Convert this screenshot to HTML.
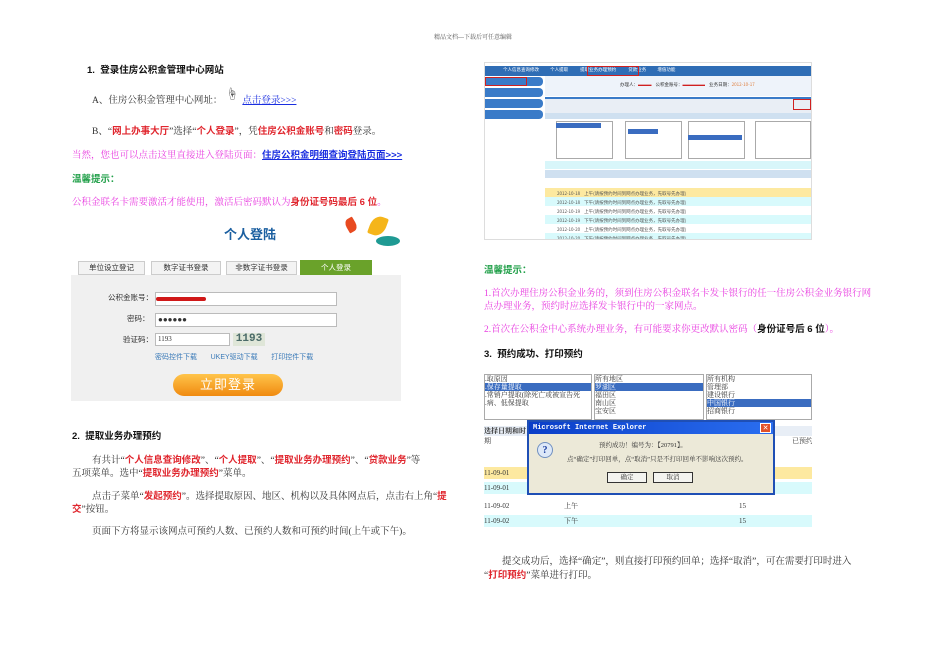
<!DOCTYPE html>
<html><head><meta charset="utf-8"><style>
*{margin:0;padding:0;box-sizing:border-box}
body{width:950px;height:672px;background:#fff;position:relative;overflow:hidden;font-family:"Liberation Serif","Noto Serif CJK SC","Noto Sans CJK SC",serif;font-size:9.5px;color:#333}
.a{position:absolute;white-space:nowrap}
.b{font-family:"Liberation Sans","Noto Sans CJK SC",sans-serif;font-weight:bold;color:#111}
.r{color:#e0262e;font-family:"Liberation Sans","Noto Sans CJK SC",sans-serif;font-weight:bold}
.p{color:#e83fe0}
.g{color:#22a04a;font-family:"Liberation Sans","Noto Sans CJK SC",sans-serif;font-weight:bold}
.l{color:#1a2ee0;text-decoration:underline}
.s{font-family:"Liberation Sans","Noto Sans CJK SC",sans-serif}
.t{position:absolute;font-size:4.5px;line-height:5px;white-space:nowrap;font-family:"Noto Sans CJK SC",sans-serif}
</style></head><body>
<div class="a" style="left:434px;top:32px;font-size:6px;color:#555">精品文档---下载后可任意编辑</div>

<div class="a b" style="left:87px;top:62px;font-size:9.5px">1.&nbsp; 登录住房公积金管理中心网站</div>
<div class="a" style="left:92px;top:92px">A、住房公积金管理中心网址：<span style="display:inline-block;width:20px"></span><span class="l">点击登录&gt;&gt;&gt;</span></div>
<div class="a" style="left:226px;top:85px;font-size:12px">☝</div>
<div class="a" style="left:92px;top:123px">B、“<span class="r">网上办事大厅</span>”选择“<span class="r">个人登录</span>”，凭<span class="r">住房公积金账号</span>和<span class="r">密码</span>登录。</div>
<div class="a p" style="left:72px;top:147px">当然，您也可以点击这里直接进入登陆页面：<span class="l s" style="font-weight:bold">住房公积金明细查询登陆页面&gt;&gt;&gt;</span></div>
<div class="a g" style="left:72px;top:171px">温馨提示：</div>
<div class="a p" style="left:72px;top:194px">公积金联名卡需要激活才能使用，激活后密码默认为<span class="r">身份证号码最后 6 位</span>。</div>

<!-- login image -->
<div class="a s" style="left:224px;top:224px;font-size:13px;font-weight:bold;color:#1b5fa0">个人登陆</div>
<div class="a" style="left:346px;top:218px;width:10px;height:14px;background:#e84a20;border-radius:50% 10% 50% 10%;transform:rotate(-30deg)"></div>
<div class="a" style="left:370px;top:216px;width:16px;height:20px;background:#f5b51a;border-radius:60% 10% 60% 10%;transform:rotate(20deg)"></div>
<div class="a" style="left:376px;top:236px;width:24px;height:10px;background:#1f9a93;border-radius:50%"></div>
<div class="a" style="left:71px;top:275px;width:330px;height:126px;background:#f0f0f0"></div>
<div class="a s" style="left:78px;top:261px;width:67px;height:14px;background:#f3f3f3;border:1px solid #ccc;font-size:7.5px;text-align:center;line-height:12px">单位设立登记</div>
<div class="a s" style="left:151px;top:261px;width:70px;height:14px;background:#f3f3f3;border:1px solid #ccc;font-size:7.5px;text-align:center;line-height:12px">数字证书登录</div>
<div class="a s" style="left:226px;top:261px;width:71px;height:14px;background:#f3f3f3;border:1px solid #ccc;font-size:7.5px;text-align:center;line-height:12px">非数字证书登录</div>
<div class="a s" style="left:300px;top:260px;width:72px;height:15px;background:#6aa22a;color:#fff;font-size:7.5px;text-align:center;line-height:15px">个人登录</div>
<div class="a s" style="left:108px;top:292px;font-size:7.5px">公积金账号：</div>
<div class="a" style="left:155px;top:292px;width:182px;height:14px;background:#fff;border:1px solid #bbb"></div>
<div class="a" style="left:156px;top:297px;width:50px;height:4px;background:#d01818;border-radius:2px"></div>
<div class="a s" style="left:127px;top:313px;font-size:7.5px">密码：</div>
<div class="a" style="left:155px;top:313px;width:182px;height:14px;background:#fff;border:1px solid #bbb;font-size:8px;line-height:12px;padding-left:2px;font-weight:bold">●●●●●●</div>
<div class="a s" style="left:123px;top:334px;font-size:7.5px">验证码：</div>
<div class="a" style="left:155px;top:333px;width:75px;height:13px;background:#fff;border:1px solid #bbb;font-size:7px;line-height:11px;padding-left:2px">1193</div>
<div class="a" style="left:233px;top:333px;width:32px;height:13px;background:#dfe6d8;font-family:'Liberation Mono',monospace;font-size:11px;font-weight:bold;color:#4a6a68;line-height:13px;text-align:center">1193</div>
<div class="a s" style="left:155px;top:352px;font-size:7px;color:#3a7ab8">密码控件下载&nbsp;&nbsp;&nbsp;&nbsp;&nbsp;&nbsp;&nbsp;UKEY驱动下载&nbsp;&nbsp;&nbsp;&nbsp;&nbsp;&nbsp;&nbsp;打印控件下载</div>
<div class="a s" style="left:173px;top:374px;width:110px;height:22px;border-radius:11px;background:linear-gradient(#ffc44a,#f08a10);color:#fff;font-size:13px;text-align:center;line-height:22px;letter-spacing:1px">立即登录</div>

<div class="a b" style="left:72px;top:428px">2.&nbsp; 提取业务办理预约</div>
<div class="a" style="left:92px;top:452px">有共计“<span class="r">个人信息查询修改</span>”、“<span class="r">个人提取</span>”、“<span class="r">提取业务办理预约</span>”、“<span class="r">贷款业务</span>”等</div>
<div class="a" style="left:72px;top:465px">五项菜单。选中“<span class="r">提取业务办理预约</span>”菜单。</div>
<div class="a" style="left:92px;top:488px">点击子菜单“<span class="r">发起预约</span>”。选择提取原因、地区、机构以及具体网点后，点击右上角“<span class="r">提</span></div>
<div class="a" style="left:72px;top:501px"><span class="r">交</span>”按钮。</div>
<div class="a" style="left:92px;top:523px">页面下方将显示该网点可预约人数、已预约人数和可预约时间(上午或下午)。</div>

<!-- screenshot 1 -->
<div class="a" style="left:484px;top:62px;width:328px;height:178px;background:#fff;border:1px solid #ddd;overflow:hidden">
 <div style="position:absolute;left:0;top:3px;width:328px;height:10px;background:#2f6db5"></div>
 <div class="t" style="left:18px;top:5px;color:#fff">个人信息查询修改&nbsp;&nbsp;&nbsp;&nbsp;&nbsp;&nbsp;&nbsp;&nbsp;&nbsp;&nbsp;&nbsp;个人提取&nbsp;&nbsp;&nbsp;&nbsp;&nbsp;&nbsp;&nbsp;&nbsp;&nbsp;&nbsp;&nbsp;&nbsp;提取业务办理预约&nbsp;&nbsp;&nbsp;&nbsp;&nbsp;&nbsp;&nbsp;&nbsp;&nbsp;&nbsp;&nbsp;&nbsp;贷款业务&nbsp;&nbsp;&nbsp;&nbsp;&nbsp;&nbsp;&nbsp;&nbsp;&nbsp;&nbsp;&nbsp;增值功能</div>
 <div style="position:absolute;left:102px;top:3px;width:52px;height:10px;border:1px solid #d02020"></div>
 <div style="position:absolute;left:0;top:14px;width:58px;height:9px;background:#3a7bc8;border-radius:0 4px 4px 0"></div>
 <div style="position:absolute;left:0;top:14px;width:42px;height:9px;border:1px solid #d02020"></div>
 <div style="position:absolute;left:0;top:25px;width:58px;height:9px;background:#3a7bc8;border-radius:0 4px 4px 0"></div>
 <div style="position:absolute;left:0;top:36px;width:58px;height:9px;background:#3a7bc8;border-radius:0 4px 4px 0"></div>
 <div style="position:absolute;left:0;top:47px;width:58px;height:9px;background:#3a7bc8;border-radius:0 4px 4px 0"></div>
 <div style="position:absolute;left:60px;top:13px;width:268px;height:20px;background:#eef3fa"></div>
 <div class="t" style="left:135px;top:20px">办理人：<span style="color:#d02020">▬▬▬</span>&nbsp;&nbsp;&nbsp;&nbsp;公积金账号：<span style="color:#d02020">▬▬▬▬▬</span>&nbsp;&nbsp;&nbsp;&nbsp;业务日期：<span style="color:#e08040">2012-10-17</span></div>
 <div style="position:absolute;left:60px;top:34px;width:268px;height:2px;background:#3a7bc8"></div>
 <div style="position:absolute;left:60px;top:36px;width:268px;height:14px;background:#e9eef5"></div>
 <div style="position:absolute;left:308px;top:36px;width:18px;height:11px;border:1px solid #d02020"></div>
 <div style="position:absolute;left:60px;top:50px;width:268px;height:6px;background:#cfe0f0"></div>
 <div style="position:absolute;left:71px;top:58px;width:57px;height:38px;border:1px solid #aaa;background:#fff"></div>
 <div style="position:absolute;left:71px;top:60px;width:45px;height:5px;background:#3a6cc0"></div>
 <div style="position:absolute;left:140px;top:58px;width:57px;height:38px;border:1px solid #aaa;background:#fff"></div>
 <div style="position:absolute;left:143px;top:66px;width:30px;height:5px;background:#3a6cc0"></div>
 <div style="position:absolute;left:203px;top:58px;width:57px;height:38px;border:1px solid #aaa;background:#fff"></div>
 <div style="position:absolute;left:203px;top:72px;width:54px;height:5px;background:#3a6cc0"></div>
 <div style="position:absolute;left:270px;top:58px;width:56px;height:38px;border:1px solid #aaa;background:#fff"></div>
 <div style="position:absolute;left:60px;top:98px;width:268px;height:8px;background:#d8f6fa"></div>
 <div style="position:absolute;left:60px;top:107px;width:268px;height:8px;background:#cfe0f0"></div>
 <div style="position:absolute;left:60px;top:125px;width:268px;height:9px;background:#fde9a0"></div>
 <div style="position:absolute;left:60px;top:134px;width:268px;height:9px;background:#d8fafc"></div>
 <div style="position:absolute;left:60px;top:152px;width:268px;height:9px;background:#d8fafc"></div>
 <div style="position:absolute;left:60px;top:170px;width:268px;height:9px;background:#d8fafc"></div>
 <div class="t" style="left:72px;top:127px;line-height:9px;color:#555">2012-10-18&nbsp;&nbsp;&nbsp;&nbsp;上午(请按预约时间到网点办理业务，先取号先办理)<br>2012-10-18&nbsp;&nbsp;&nbsp;&nbsp;下午(请按预约时间到网点办理业务，先取号先办理)<br>2012-10-19&nbsp;&nbsp;&nbsp;&nbsp;上午(请按预约时间到网点办理业务，先取号先办理)<br>2012-10-19&nbsp;&nbsp;&nbsp;&nbsp;下午(请按预约时间到网点办理业务，先取号先办理)<br>2012-10-20&nbsp;&nbsp;&nbsp;&nbsp;上午(请按预约时间到网点办理业务，先取号先办理)<br>2012-10-20&nbsp;&nbsp;&nbsp;&nbsp;下午(请按预约时间到网点办理业务，先取号先办理)</div>
</div>

<div class="a g" style="left:484px;top:262px">温馨提示：</div>
<div class="a p" style="left:484px;top:285px">1.首次办理住房公积金业务的，须到住房公积金联名卡发卡银行的任一住房公积金业务银行网</div>
<div class="a p" style="left:484px;top:298px">点办理业务，预约时应选择发卡银行中的一家网点。</div>
<div class="a p" style="left:484px;top:321px">2.首次在公积金中心系统办理业务，有可能要求你更改默认密码（<span class="b">身份证号后 6 位</span>）。</div>
<div class="a b" style="left:484px;top:346px">3.&nbsp; 预约成功、打印预约</div>

<!-- screenshot 2 -->
<div class="a" style="left:484px;top:370px;width:328px;height:162px;background:#fff;overflow:hidden;font-size:7px">
 <div style="position:absolute;left:0;top:4px;width:108px;height:46px;border:1px solid #aaa;line-height:8px">.取原因<br><span style="background:#3a6cc0;color:#fff;display:block">.保存量提取</span>.常销户提取(除死亡或被宣告死<br>.病、低保提取</div>
 <div style="position:absolute;left:110px;top:4px;width:110px;height:46px;border:1px solid #aaa;line-height:8px">所有地区<br><span style="background:#3a6cc0;color:#fff;display:block">罗湖区</span>福田区<br>南山区<br>宝安区</div>
 <div style="position:absolute;left:222px;top:4px;width:106px;height:46px;border:1px solid #aaa;line-height:8px">所有机构<br>管理部<br>建设银行<br><span style="background:#3a6cc0;color:#fff;display:block">中国银行</span>招商银行</div>
 <div style="position:absolute;left:0;top:56px;width:328px;height:10px;background:#e8eef6;font-weight:bold">选择日期和时</div>
 <div style="position:absolute;left:0;top:66px;width:328px;height:10px;line-height:10px">期<span style="position:absolute;left:308px">已预约</span></div>
 <div style="position:absolute;left:0;top:97px;width:328px;height:12px;background:#fde9a0;line-height:12px">11-09-01</div>
 <div style="position:absolute;left:0;top:112px;width:328px;height:12px;background:#d8fafc;line-height:12px">11-09-01</div>
 <div style="position:absolute;left:0;top:130px;width:328px;height:12px;line-height:12px">11-09-02<span style="position:absolute;left:80px">上午</span><span style="position:absolute;left:255px">15</span></div>
 <div style="position:absolute;left:0;top:145px;width:328px;height:12px;background:#d8fafc;line-height:12px">11-09-02<span style="position:absolute;left:80px">下午</span><span style="position:absolute;left:255px">15</span></div>
 <div style="position:absolute;left:43px;top:50px;width:248px;height:75px;background:#ece9d8;border:2px solid #1f4fb5">
  <div style="height:12px;background:linear-gradient(90deg,#0a3ec8,#2a6ef0);color:#fff;font-family:'Liberation Mono',monospace;font-weight:bold;font-size:7px;line-height:12px;padding-left:4px">Microsoft Internet Explorer</div>
  <div style="position:absolute;right:2px;top:1px;width:11px;height:10px;background:#e0502a;border:1px solid #fff;color:#fff;font-size:7px;text-align:center;line-height:8px">✕</div>
  <div style="position:absolute;left:8px;top:20px;width:16px;height:16px;border-radius:50%;background:#dde8f8;border:1px solid #7090c0;color:#1a3ea0;font-weight:bold;text-align:center;line-height:15px;font-size:10px">?</div>
  <div style="position:absolute;left:70px;top:18px;font-size:6.5px">预约成功！编号为：【20791】。</div>
  <div style="position:absolute;left:38px;top:32px;font-size:6.5px">点“确定”打印回单，点“取消”只是不打印回单不影响这次预约。</div>
  <div style="position:absolute;left:78px;top:50px;width:40px;height:11px;border:1px solid #333;background:#f4f4f0;font-size:6.5px;text-align:center;line-height:9px">确定</div>
  <div style="position:absolute;left:124px;top:50px;width:40px;height:11px;border:1px solid #333;background:#f4f4f0;font-size:6.5px;text-align:center;line-height:9px">取消</div>
 </div>
</div>

<div class="a" style="left:502px;top:553px">提交成功后，选择“确定”，则直接打印预约回单；选择“取消”，可在需要打印时进入</div>
<div class="a" style="left:484px;top:567px">“<span class="r">打印预约</span>”菜单进行打印。</div>
</body></html>
